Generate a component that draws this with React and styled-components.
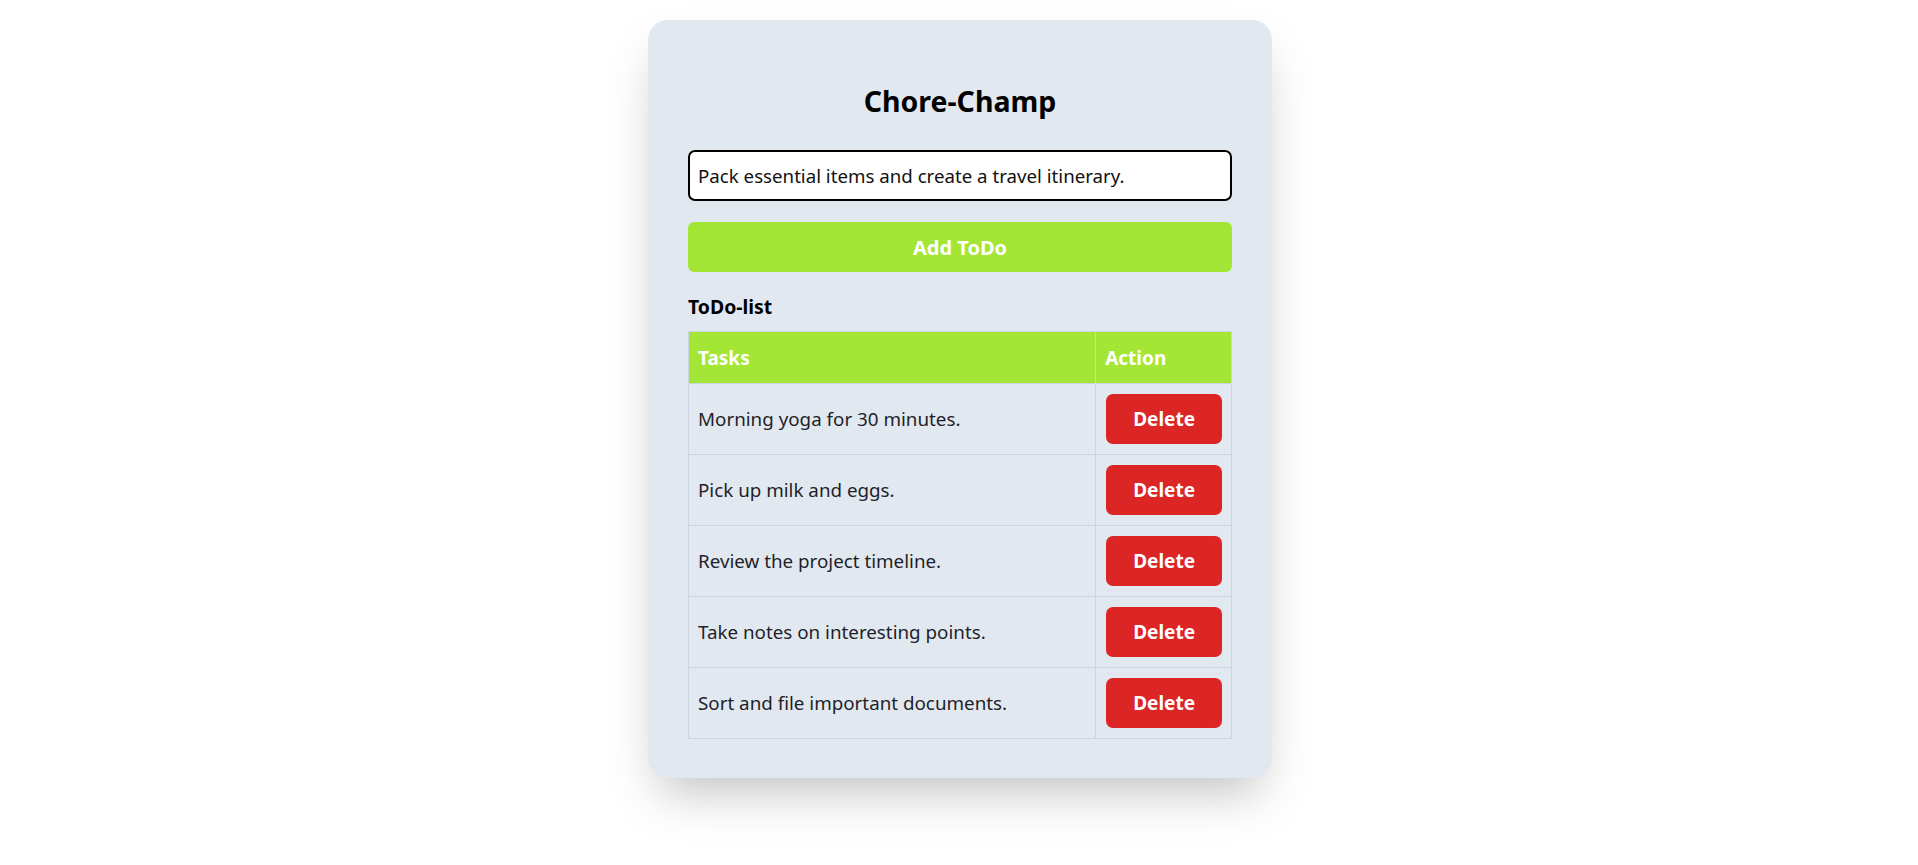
import React from "react";
import styled, { createGlobalStyle } from "styled-components";

const FONT = `"Noto Sans", "Open Sans", sans-serif`;

const Global = createGlobalStyle`
  html, body { margin: 0; padding: 0; background: #ffffff; }
  body { font-family: ${FONT}; }
  * { box-sizing: border-box; }
`;

const Page = styled.div`
  display: flex;
  justify-content: center;
  align-items: flex-start;
  min-height: 100vh;
  padding: 20px 0 0 2px;
`;

const Card = styled.div`
  width: 624px;
  background: #e2e8f0;
  border-radius: 20px;
  padding: 40px 40px 39px;
  box-shadow: 0 25px 50px -12px rgba(0, 0, 0, 0.25);
`;

const Title = styled.h1`
  margin: 21px 0 29px;
  font-size: 28.5px;
  line-height: 40px;
  font-weight: 700;
  text-align: center;
  color: #000;
`;

const Input = styled.input`
  display: block;
  width: 100%;
  height: 51px;
  padding: 0 8px;
  border: 2px solid #000;
  border-radius: 7px;
  background: #fff;
  font-family: ${FONT};
  font-size: 18.7px;
  color: #111;
  outline: none;
`;

const AddButton = styled.button`
  display: block;
  width: 100%;
  height: 50px;
  margin-top: 21px;
  border: none;
  border-radius: 6px;
  background: #a3e635;
  color: #fff;
  font-family: ${FONT};
  font-size: 20px;
  font-weight: 700;
  cursor: pointer;
`;

const ListLabel = styled.h2`
  margin: 21px 0 10px;
  font-size: 19.4px;
  line-height: 28px;
  font-weight: 700;
  color: #000;
`;

const Table = styled.table`
  width: 100%;
  border-collapse: collapse;
`;

const HeadCell = styled.th`
  height: 52px;
  padding: 0 9px;
  text-align: left;
  background: #a3e635;
  color: #fff;
  font-size: 19px;
  font-weight: 700;
  border: 1px solid #cbd5e1;
  width: ${(p) => (p.$narrow ? "135px" : "auto")};
`;

const Cell = styled.td`
  height: 71px;
  padding: 0 9px;
  border: 1px solid #cbd5e1;
  font-size: 18.8px;
  color: #1e1f2a;
`;

const DeleteButton = styled.button`
  height: 50px;
  padding: 0 27px;
  margin-left: 1px;
  border: none;
  border-radius: 7px;
  background: #dc2626;
  color: #fff;
  font-family: ${FONT};
  font-size: 19px;
  font-weight: 700;
  cursor: pointer;
`;

const tasks = [
  "Morning yoga for 30 minutes.",
  "Pick up milk and eggs.",
  "Review the project timeline.",
  "Take notes on interesting points.",
  "Sort and file important documents.",
];

export default function App() {
  return (
    <>
      <Global />
      <Page>
        <Card>
          <Title>Chore-Champ</Title>
          <Input defaultValue="Pack essential items and create a travel itinerary." />
          <AddButton>Add ToDo</AddButton>
          <ListLabel>ToDo-list</ListLabel>
          <Table>
            <thead>
              <tr>
                <HeadCell>Tasks</HeadCell>
                <HeadCell $narrow>Action</HeadCell>
              </tr>
            </thead>
            <tbody>
              {tasks.map((t) => (
                <tr key={t}>
                  <Cell>{t}</Cell>
                  <Cell>
                    <DeleteButton>Delete</DeleteButton>
                  </Cell>
                </tr>
              ))}
            </tbody>
          </Table>
        </Card>
      </Page>
    </>
  );
}
